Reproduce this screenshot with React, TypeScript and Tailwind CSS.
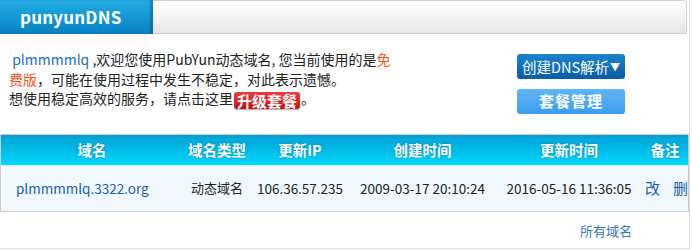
const font = { fontFamily: '"Noto Sans CJK SC", "Noto Sans", sans-serif' };

const columns = [
  { key: "domain", label: "域名", width: "w-[182px]" },
  { key: "type", label: "域名类型", width: "w-[68px]" },
  { key: "ip", label: "更新IP", width: "w-[98px]" },
  { key: "created", label: "创建时间", width: "w-[147px]" },
  { key: "updated", label: "更新时间", width: "w-[146px]" },
  { key: "note", label: "备注", width: "flex-1" },
];

const domains = [
  {
    name: "plmmmmlq.3322.org",
    type: "动态域名",
    ip: "106.36.57.235",
    created: "2009-03-17 20:10:24",
    updated: "2016-05-16 11:36:05",
  },
];

export default function App() {
  return (
    <div
      className="h-[251px] w-[692px] overflow-hidden bg-white text-[#333]"
      style={font}
    >
      <div className="h-[249px] w-[690px] border-r border-[#d8d8d8] border-b border-b-[#dcdcdc]">
        {/* 顶部标签栏 */}
        <div className="flex h-[34px] bg-white">
          <div className="flex w-[153px] items-center bg-gradient-to-b from-[#22aee4] to-[#0781c3] pl-[20px] shadow-[inset_-3px_0_2px_rgba(0,60,120,0.35)]">
            <span className="text-[17px] font-bold tracking-[0.2px] text-white">punyunDNS</span>
          </div>
          <div className="mr-[2px] flex-1 rounded-tr-[4px] border border-l-0 border-[#cfcfcf] bg-gradient-to-b from-white to-[#e6e6e6]" />
        </div>

        {/* 欢迎信息 + 按钮 */}
        <div className="flex h-[100px]">
          <div className="w-[508px] whitespace-nowrap pl-[9px] pt-[16px] text-[14px] leading-[19.5px] text-[#222]">
            <span className="text-[#1a6fb5]">&nbsp;plmmmmlq</span> ,欢迎您使用PubYun动态域名, 您当前使用的是
            <span className="text-[#f2541b]">
              免
              <br />
              费版
            </span>
            ，可能在使用过程中发生不稳定，对此表示遗憾。
            <br />
            想使用稳定高效的服务，请点击这里
            <span className="mx-[1px] inline-block rounded-[3px] bg-gradient-to-b from-[#ee3b3b] to-[#c01212] px-[3px] align-middle text-[15px] font-bold leading-[17px] text-white shadow-[0_1px_1px_rgba(0,0,0,0.3)]">
              升级套餐
            </span>
            。
          </div>
          <div className="flex flex-col gap-[10px] pl-[9px] pt-[20px]">
            <button className="flex h-[25px] w-[108px] items-center justify-center rounded-[3px] bg-gradient-to-b from-[#1c84cc] to-[#0a5ca6] text-[14.5px] text-white">
              创建DNS解析<span className="ml-[1px] text-[10px]">▼</span>
            </button>
            <button className="flex h-[25px] w-[108px] items-center justify-center rounded-[3px] bg-gradient-to-b from-[#62b6f2] to-[#3a9df0] text-[15px] font-bold tracking-[1px] text-white">
              套餐管理
            </button>
          </div>
        </div>

        {/* 域名列表 */}
        <div className="w-[689px] border border-[#cccccc]">
          <div className="flex h-[30px] items-center bg-gradient-to-b from-[#00a0d6] to-[#00d8fa] text-[14.5px] font-bold text-white [text-shadow:0_0_2px_rgba(0,90,140,0.6)]">
            {columns.map((col) => (
              <div key={col.key} className={`${col.width} text-center`}>
                {col.label}
              </div>
            ))}
          </div>
          {domains.map((d) => (
            <div key={d.name} className="flex h-[46px] items-center bg-[#f0f8fe] text-[13.5px] text-[#222]">
              <div className="w-[182px] pl-[15px] text-[#1b5fa5]">{d.name}</div>
              <div className="w-[68px] text-center text-[13px]">{d.type}</div>
              <div className="w-[98px] text-center">{d.ip}</div>
              <div className="w-[147px] text-center">{d.created}</div>
              <div className="w-[146px] text-center">{d.updated}</div>
              <div className="flex flex-1 justify-between pl-[3px] text-[15px] text-[#1b5fa5]">
                <span>改</span>
                <span>删</span>
              </div>
            </div>
          ))}
        </div>

        <div className="flex justify-end pr-[57px] pt-[9px] text-[13px] text-[#3b78b5]">
          所有域名
        </div>
      </div>
    </div>
  );
}
